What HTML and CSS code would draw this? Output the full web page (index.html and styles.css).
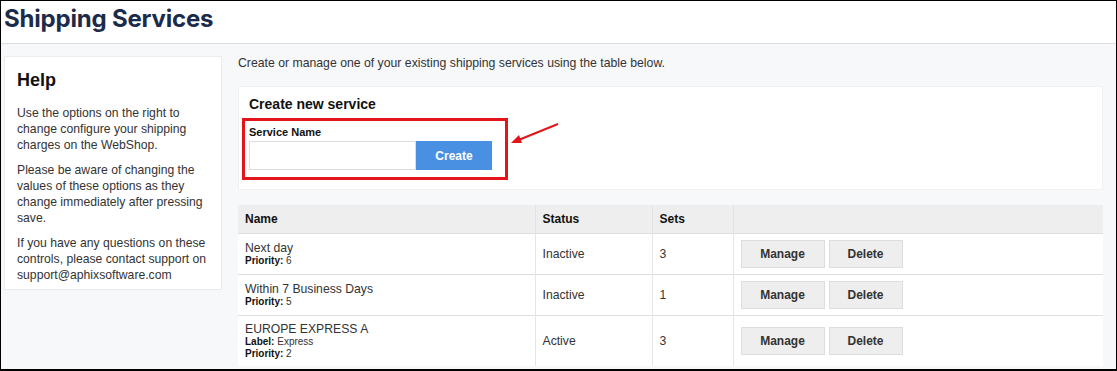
FILE: index.html
```html
<!DOCTYPE html>
<html lang="en">
<head>
    <meta charset="UTF-8">
    <meta name="viewport" content="width=device-width, initial-scale=1.0">
    <title>Shipping Services</title>
    <link rel="stylesheet" href="styles.css">
</head>
<body>

<div class="frame">
    <div class="page-header">
        <h1>Shipping Services</h1>
    </div>

    <div class="page-body">
        <!-- Help sidebar -->
        <div class="help-panel">
            <h2>Help</h2>
            <p>Use the options on the right to change configure your shipping charges on the WebShop.</p>
            <p>Please be aware of changing the values of these options as they change immediately after pressing save.</p>
            <p>If you have any questions on these controls, please contact support on support@aphixsoftware.com</p>
        </div>

        <div class="main">
            <p class="intro">Create or manage one of your existing shipping services using the table below.</p>

            <!-- Create form -->
            <div class="create-panel">
                <h3>Create new service</h3>
                <div class="form-group">
                    <label for="serviceName">Service Name</label>
                    <div class="input-row">
                        <input type="text" id="serviceName">
                        <button class="btn-create">Create</button>
                    </div>
                </div>
                <svg class="arrow" width="50" height="24" viewBox="0 0 50 24">
                    <line x1="48" y1="2" x2="6" y2="19" stroke="#e3151a" stroke-width="2"/>
                    <polygon points="1,21 9,13 12,21" fill="#e3151a"/>
                </svg>
            </div>

            <!-- Services table -->
            <table class="services">
                <colgroup>
                    <col class="col-name">
                    <col class="col-status">
                    <col class="col-sets">
                    <col class="col-actions">
                </colgroup>
                <thead>
                    <tr>
                        <th>Name</th>
                        <th>Status</th>
                        <th>Sets</th>
                        <th></th>
                    </tr>
                </thead>
                <tbody>
                    <tr class="row-short">
                        <td>
                            <div class="svc-name">Next day</div>
                            <div class="svc-meta"><strong>Priority:</strong> 6</div>
                        </td>
                        <td>Inactive</td>
                        <td>3</td>
                        <td><button class="btn">Manage</button><button class="btn btn-delete">Delete</button></td>
                    </tr>
                    <tr class="row-short">
                        <td>
                            <div class="svc-name">Within 7 Business Days</div>
                            <div class="svc-meta"><strong>Priority:</strong> 5</div>
                        </td>
                        <td>Inactive</td>
                        <td>1</td>
                        <td><button class="btn">Manage</button><button class="btn btn-delete">Delete</button></td>
                    </tr>
                    <tr>
                        <td>
                            <div class="svc-name">EUROPE EXPRESS A</div>
                            <div class="svc-meta"><strong>Label:</strong> Express</div>
                            <div class="svc-meta"><strong>Priority:</strong> 2</div>
                        </td>
                        <td>Active</td>
                        <td>3</td>
                        <td><button class="btn">Manage</button><button class="btn btn-delete">Delete</button></td>
                    </tr>
                </tbody>
            </table>
        </div>
    </div>
</div>

</body>
</html>
```

FILE: styles.css
```css
body {
    font-family: "Liberation Sans", Arial, sans-serif;
    margin: 0;
    padding: 0;
    color: #333;
}
.frame {
    width: 1117px;
    height: 371px;
    box-sizing: border-box;
    border: 1px solid #000;
    border-bottom-width: 2px;
    background-color: #f7f8fa;
    overflow: hidden;
}
.page-header {
    background-color: #fff;
    height: 42px;
    border-bottom: 1px solid #dcdde0;
}
.page-header h1 {
    margin: 0;
    padding: 3px 0 0 3px;
    font-family: Inter, "Open Sans", sans-serif;
    font-size: 24px;
    font-weight: 700;
    line-height: 30px;
    color: #1b2b49;
    letter-spacing: -0.2px;
}
.page-body {
    display: flex;
    align-items: flex-start;
    gap: 16px;
    padding: 12px 0 0 3px;
}
.help-panel {
    width: 218px;
    height: 234px;
    box-sizing: border-box;
    background-color: #fff;
    border: 1px solid #ebecee;
    padding: 12px 10px 12px 12px;
}
.help-panel h2 {
    margin: 0 0 14px 0;
    font-size: 18px;
    line-height: 22px;
    color: #111;
}
.help-panel p {
    margin: 0 0 9px 0;
    font-size: 12.2px;
    line-height: 16px;
    color: #333;
}
.main {
    width: 865px;
}
.intro {
    margin: 0 0 16px 0;
    font-size: 12.25px;
    line-height: 14px;
}
.create-panel {
    position: relative;
    background-color: #fff;
    border: 1px solid #f0f1f3;
    height: 104px;
    box-sizing: border-box;
    padding: 9px 10px;
}
.create-panel h3 {
    margin: 0 0 6px 0;
    font-size: 14px;
    line-height: 16px;
    color: #111;
}
.form-group {
    width: 266px;
    height: 62px;
    box-sizing: border-box;
    border: 3px solid #e3151a;
    margin-left: -7px;
    padding: 5px 4px;
}
.form-group label {
    display: block;
    font-size: 11px;
    font-weight: bold;
    line-height: 13px;
    margin-bottom: 2px;
    color: #111;
}
.input-row {
    display: flex;
}
.input-row input[type="text"] {
    width: 167px;
    height: 29px;
    box-sizing: border-box;
    border: 1px solid #ddd;
    margin: 0;
}
.btn-create {
    width: 76px;
    height: 29px;
    background-color: #4a90e2;
    color: #fff;
    border: none;
    font-family: "Liberation Sans", Arial, sans-serif;
    font-weight: bold;
    font-size: 12px;
}
.arrow {
    position: absolute;
    left: 271px;
    top: 35px;
}
.services {
    margin-top: 15px;
    width: 865px;
    table-layout: fixed;
    border-collapse: collapse;
    background-color: #fff;
    font-size: 12.2px;
}
.col-name { width: 297px; }
.col-status { width: 117px; }
.col-sets { width: 81px; }
.col-actions { width: 370px; }
.services th {
    background-color: #eee;
    text-align: left;
    font-size: 12px;
    height: 28px;
    padding: 0 7px;
    border-left: 1px solid #e2e2e2;
    color: #111;
}
.services th:first-child {
    border-left: none;
}
.services td {
    border-top: 1px solid #dedede;
    border-left: 1px solid #e6e6e6;
    padding: 6px 6px 6px 7px;
    vertical-align: middle;
}
.services td:first-child {
    border-left: none;
}
.services tr.row-short td {
    height: 28px;
}
.svc-name {
    font-size: 12.2px;
    line-height: 14px;
}
.svc-meta {
    font-size: 10px;
    line-height: 12px;
}
.svc-meta strong {
    color: #111;
}
.btn {
    width: 84px;
    height: 28px;
    padding: 0;
    margin-right: 4px;
    background-color: #eee;
    border: 1px solid #ddd;
    font-family: "Liberation Sans", Arial, sans-serif;
    font-size: 12px;
    font-weight: bold;
    color: #333;
}
.btn-delete {
    width: 74px;
}
```
